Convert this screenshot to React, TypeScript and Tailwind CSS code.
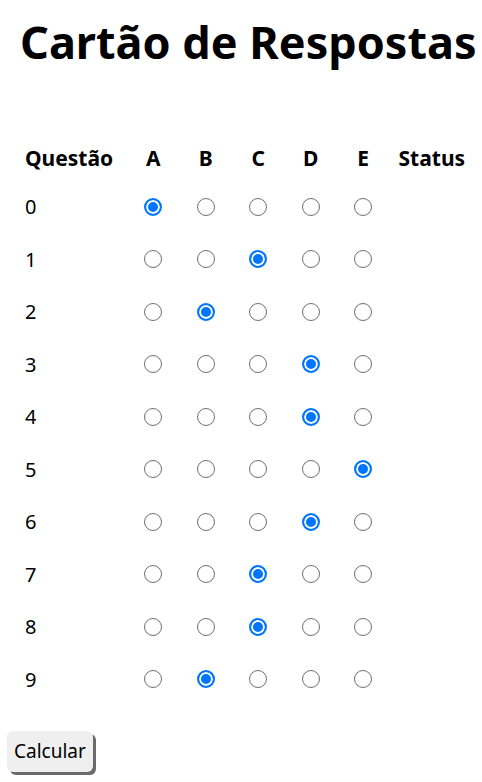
import React, { useState } from 'react';

const options = ['A', 'B', 'C', 'D', 'E'];
const initial = [0, 2, 1, 3, 3, 4, 3, 2, 2, 1];

export default function App() {
  const [answers, setAnswers] = useState<number[]>(initial);

  return (
    <div className="w-[482px] h-[782px] bg-white text-black font-['Noto_Sans',sans-serif]">
      <h1 className="pt-[12px] pl-[20px] text-[45px] font-bold leading-[60px] whitespace-nowrap">
        Cartão de Respostas
      </h1>

      <table className="mt-[67px] ml-[20px] border-collapse">
        <thead>
          <tr className="h-[40px] text-[21px] font-bold">
            <th className="w-[107px] pl-[5px] text-left">Questão</th>
            {options.map((o) => (
              <th key={o} className="w-[52.5px] text-center">{o}</th>
            ))}
            <th className="pl-[9px] text-left">Status</th>
          </tr>
        </thead>
        <tbody>
          {answers.map((sel, q) => (
            <tr key={q} className="h-[52.5px] text-[20px]">
              <td className="pl-[5px] pt-[4px]">{q}</td>
              {options.map((o, i) => (
                <td key={o} className="text-center align-middle">
                  <input
                    type="radio"
                    name={`q${q}`}
                    checked={sel === i}
                    onChange={() =>
                      setAnswers((a) => a.map((v, k) => (k === q ? i : v)))
                    }
                    className="appearance-none w-[18px] h-[18px] m-0 align-middle rounded-full border-[1.5px] border-[#6f6f6f] bg-white checked:border-2 checked:border-[#0075ff] checked:bg-[#0075ff] checked:shadow-[inset_0_0_0_2px_#ffffff]"
                  />
                </td>
              ))}
              <td></td>
            </tr>
          ))}
        </tbody>
      </table>

      <button className="mt-[27px] ml-[7px] h-[41px] px-[7px] rounded-[6px] bg-[#efefef] text-[19px] shadow-[3px_3px_0_#6b6b6b]">
        Calcular
      </button>
    </div>
  );
}
